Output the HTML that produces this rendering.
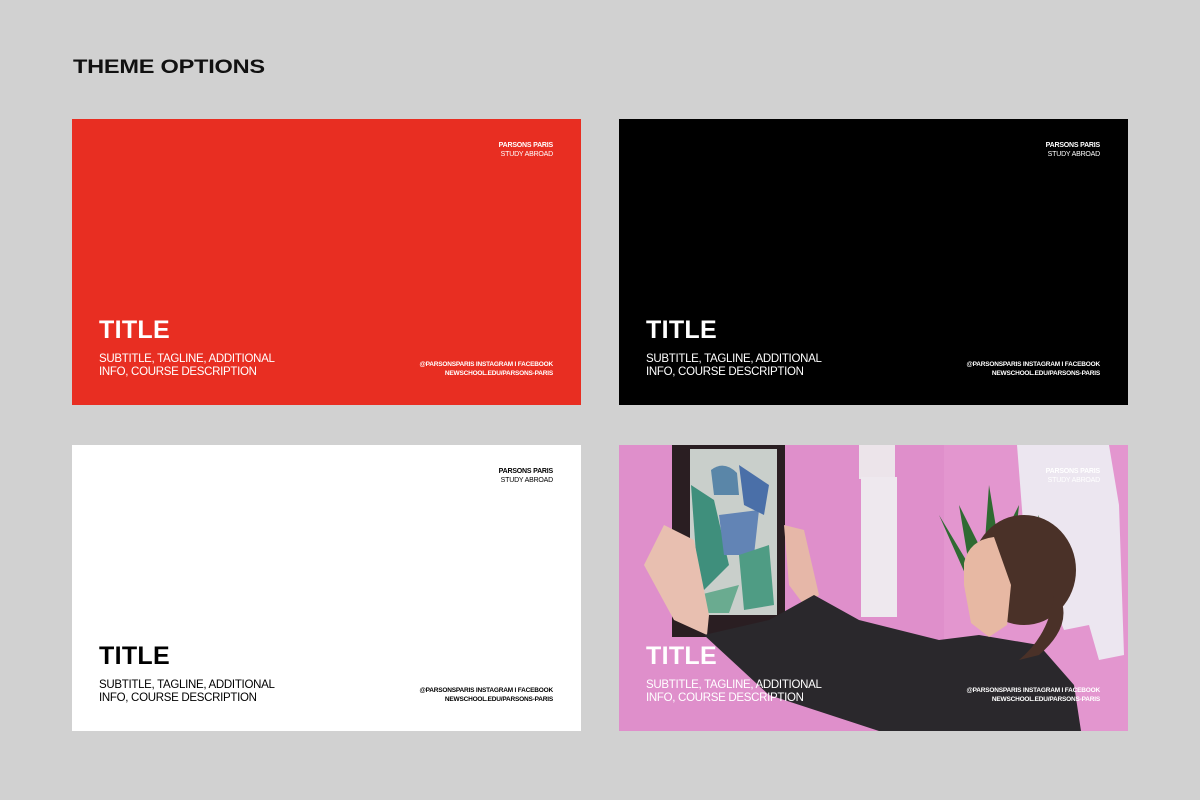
<!DOCTYPE html>
<html><head><meta charset="utf-8"><style>
*{margin:0;padding:0;box-sizing:border-box}
body{width:1200px;height:800px;background:#d1d1d1;font-family:"Liberation Sans",sans-serif;position:relative;overflow:hidden}
h1{position:absolute;left:73px;top:57px;font-size:19px;font-weight:900;letter-spacing:-0.2px;color:#111;transform:scaleX(1.24);transform-origin:left;white-space:nowrap}
.p{position:absolute;width:509px;height:286px;overflow:hidden}
.tr{position:absolute;right:28px;top:22px;text-align:right;font-size:7px;line-height:9px;letter-spacing:-0.2px}
.t{position:absolute;left:27px;top:197px;font-size:25px;font-weight:bold;letter-spacing:0.3px}
.s{position:absolute;left:27px;top:234px;font-size:11.5px;line-height:12.5px;letter-spacing:-0.3px}
.br{position:absolute;right:28px;top:242px;text-align:right;font-size:6.5px;line-height:8.5px;font-weight:bold;letter-spacing:-0.2px}
.w{color:#fff}.k{color:#000}
svg{position:absolute;left:0;top:0}
</style></head><body>
<h1>THEME OPTIONS</h1>

<div class="p w" style="left:72px;top:119px;background:#e82e22">
<div class="tr"><b>PARSONS PARIS</b><br>STUDY ABROAD</div>
<div class="t">TITLE</div>
<div class="s">SUBTITLE, TAGLINE, ADDITIONAL<br>INFO, COURSE DESCRIPTION</div>
<div class="br">@PARSONSPARIS INSTAGRAM I FACEBOOK<br>NEWSCHOOL.EDU/PARSONS-PARIS</div>
</div>

<div class="p w" style="left:619px;top:119px;background:#000">
<div class="tr"><b>PARSONS PARIS</b><br>STUDY ABROAD</div>
<div class="t">TITLE</div>
<div class="s">SUBTITLE, TAGLINE, ADDITIONAL<br>INFO, COURSE DESCRIPTION</div>
<div class="br">@PARSONSPARIS INSTAGRAM I FACEBOOK<br>NEWSCHOOL.EDU/PARSONS-PARIS</div>
</div>

<div class="p k" style="left:72px;top:445px;background:#fff">
<div class="tr"><b>PARSONS PARIS</b><br>STUDY ABROAD</div>
<div class="t">TITLE</div>
<div class="s">SUBTITLE, TAGLINE, ADDITIONAL<br>INFO, COURSE DESCRIPTION</div>
<div class="br">@PARSONSPARIS INSTAGRAM I FACEBOOK<br>NEWSCHOOL.EDU/PARSONS-PARIS</div>
</div>

<div class="p w" style="left:619px;top:445px;background:#df8fcb">
<svg width="509" height="286" viewBox="0 0 509 286">
<rect x="0" y="0" width="509" height="286" fill="#df8fcb"/>
<rect x="325" y="0" width="184" height="286" fill="#e396cf"/>
<rect x="240" y="0" width="36" height="34" fill="#ece4ea"/>
<rect x="242" y="32" width="36" height="140" fill="#eee8ee"/>
<path d="M398 0 L490 0 L500 60 L505 210 L480 215 L470 180 L445 185 L405 90 Z" fill="#ece6f0"/>
<path d="M320 70 L350 120 L340 60 L365 110 L370 40 L380 100 L400 60 L395 110 L420 70 L410 120 L360 160 Z" fill="#2f6a32"/>
<rect x="53" y="0" width="113" height="192" fill="#2a1e22"/>
<rect x="71" y="4" width="87" height="166" fill="#c9cfcb"/>
<path d="M92 25 Q105 15 118 28 L120 50 L95 50 Z" fill="#5a86a8"/>
<path d="M72 40 L95 55 L110 120 L80 150 Z" fill="#3f8f7c"/>
<path d="M100 70 L140 65 L135 110 L105 110 Z" fill="#6284b5"/>
<path d="M120 20 L150 40 L145 70 L125 60 Z" fill="#4a6fa8"/>
<path d="M120 110 L150 100 L155 160 L125 165 Z" fill="#4f9c84"/>
<path d="M80 150 L120 140 L110 168 L75 168 Z" fill="#6aab90"/>
<path d="M25 120 L45 80 L75 95 L90 170 L88 190 L55 175 Z" fill="#e8bfb0"/>
<path d="M165 80 L185 85 L200 150 L185 160 L170 140 Z" fill="#e6b7a8"/>
<path d="M85 190 L150 175 L195 150 L240 175 L320 195 L360 190 L420 200 L455 240 L462 286 L260 286 L150 250 Z" fill="#2a282c"/>
<ellipse cx="405" cy="125" rx="52" ry="55" fill="#4a3128"/>
<path d="M345 118 Q350 95 375 92 L392 140 L388 180 L370 192 L352 178 L345 140 Z" fill="#e7b8a3"/>
<path d="M440 150 Q455 180 420 210 L400 215 Q430 190 435 150 Z" fill="#4a3128"/>
</svg>
<div class="tr"><b>PARSONS PARIS</b><br>STUDY ABROAD</div>
<div class="t">TITLE</div>
<div class="s">SUBTITLE, TAGLINE, ADDITIONAL<br>INFO, COURSE DESCRIPTION</div>
<div class="br">@PARSONSPARIS INSTAGRAM I FACEBOOK<br>NEWSCHOOL.EDU/PARSONS-PARIS</div>
</div>
</body></html>
